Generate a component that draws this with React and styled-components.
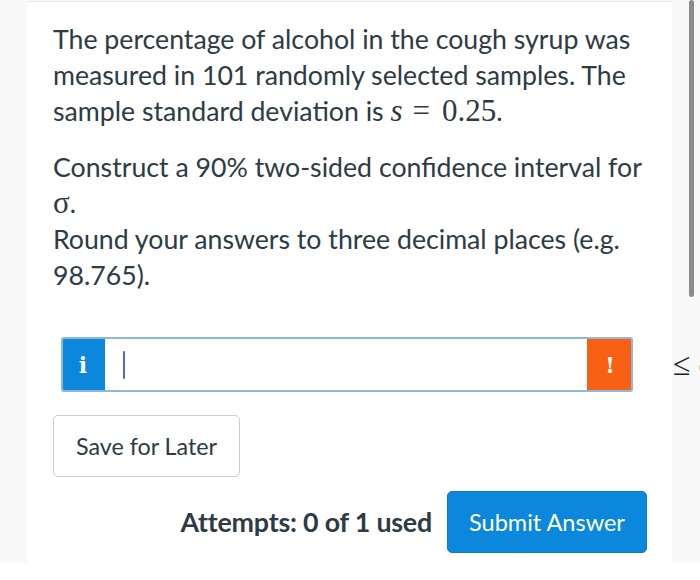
import React from 'react'
import styled, { createGlobalStyle } from 'styled-components'

const GlobalStyle = createGlobalStyle`
  html, body {
    margin: 0;
    padding: 0;
    overflow: hidden;
    background: #ffffff;
  }
  * {
    box-sizing: border-box;
  }
`

const Page = styled.div`
  position: relative;
  width: 700px;
  height: 580px;
  background: #ffffff;
  overflow: hidden;
  font-family: Lato, "Noto Sans", sans-serif;
  color: #2d3b45;
`

const Backdrop = styled.div`
  height: 563px;
  background: #f8f8f8;
  padding: 1px 28px 0 27px;
`

const Card = styled.div`
  height: 100%;
  background: #ffffff;
  border-top: 1px solid #e6e6e6;
  padding: 19px 20px 0 26px;
`

const Paragraph = styled.p`
  margin: 0 0 20px;
  font-size: 26.7px;
  line-height: 36px;
`

const Math = styled.span`
  font-family: "Liberation Serif", "DejaVu Serif", serif;
  font-size: 31px;
  line-height: 0;
`

const MathVar = styled.i`
  font-style: italic;
  margin-right: 10px;
`

const MathOp = styled.span`
  margin-right: 12px;
`

const AnswerRow = styled.div`
  display: flex;
  align-items: center;
  margin: 44px 0 0 8px;
  white-space: nowrap;
`

const InputBox = styled.div`
  flex: 0 0 572px;
  display: flex;
  height: 55px;
  border: 2px solid #8db7dc;
  border-radius: 3px;
  overflow: hidden;
  background: #ffffff;
`

const Tag = styled.div`
  display: flex;
  align-items: center;
  justify-content: center;
  flex: 0 0 ${(p) => p.$w}px;
  background: ${(p) => p.$bg};
  color: #ffffff;
  font-family: "DejaVu Serif", "Liberation Serif", serif;
  font-weight: 700;
  font-size: 22px;
  margin: -2px ${(p) => (p.$right ? '-2px' : '0')} -2px ${(p) => (p.$right ? '0' : '-2px')};
`

const Field = styled.div`
  flex: 1;
  display: flex;
  align-items: center;
  padding-left: 18px;
`

const Caret = styled.div`
  width: 2px;
  height: 28px;
  background: #5566cc;
  border-radius: 1px;
`

const Relation = styled.span`
  margin-left: 40px;
  font-family: "Liberation Serif", "DejaVu Serif", serif;
  font-size: 32px;
  color: #222;
`

const SaveButton = styled.button`
  display: block;
  margin-top: 23px;
  width: 187px;
  height: 62px;
  background: #ffffff;
  border: 1px solid #c7cdd1;
  border-radius: 5px;
  font-family: Lato, "Noto Sans", sans-serif;
  font-size: 23.3px;
  color: #2d3b45;
`

const Footer = styled.div`
  display: flex;
  align-items: center;
  justify-content: flex-end;
  gap: 15px;
  margin-top: 14px;
  padding-right: 5px;
`

const Attempts = styled.span`
  font-size: 26.8px;
  font-weight: 700;
  letter-spacing: -0.2px;
  color: #2d3b45;
`

const SubmitButton = styled.button`
  width: 200px;
  height: 62px;
  background: #0b87dc;
  border: 1px solid #0a7cc9;
  border-radius: 5px;
  color: #ffffff;
  font-family: Lato, "Noto Sans", sans-serif;
  font-size: 23.5px;
`

const ScrollThumb = styled.div`
  position: absolute;
  top: 0;
  right: 6px;
  width: 5px;
  height: 297px;
  border-radius: 3px;
  background: #8a8a8a;
`

const App = () => {
  return (
    <>
      <GlobalStyle />
      <Page>
        <Backdrop>
          <Card>
            <Paragraph>
              The percentage of alcohol in the cough syrup was measured in 101 randomly selected samples. The
              sample standard deviation is{' '}
              <Math>
                <MathVar>s</MathVar>
                <MathOp>=</MathOp>0.25
              </Math>
              .
            </Paragraph>
            <Paragraph>
              Construct a 90% two-sided confidence interval for
              <br />
              <Math>σ</Math>.
              <br />
              Round your answers to three decimal places (e.g. 98.765).
            </Paragraph>

            <AnswerRow>
              <InputBox>
                <Tag $bg="#0b87dc" $w={44}>i</Tag>
                <Field>
                  <Caret />
                </Field>
                <Tag $bg="#f86114" $w={46} $right>!</Tag>
              </InputBox>
              <Relation>≤ σ</Relation>
            </AnswerRow>

            <SaveButton>Save for Later</SaveButton>

            <Footer>
              <Attempts>Attempts: 0 of 1 used</Attempts>
              <SubmitButton>Submit Answer</SubmitButton>
            </Footer>
          </Card>
        </Backdrop>
        <ScrollThumb />
      </Page>
    </>
  )
}

export default App
